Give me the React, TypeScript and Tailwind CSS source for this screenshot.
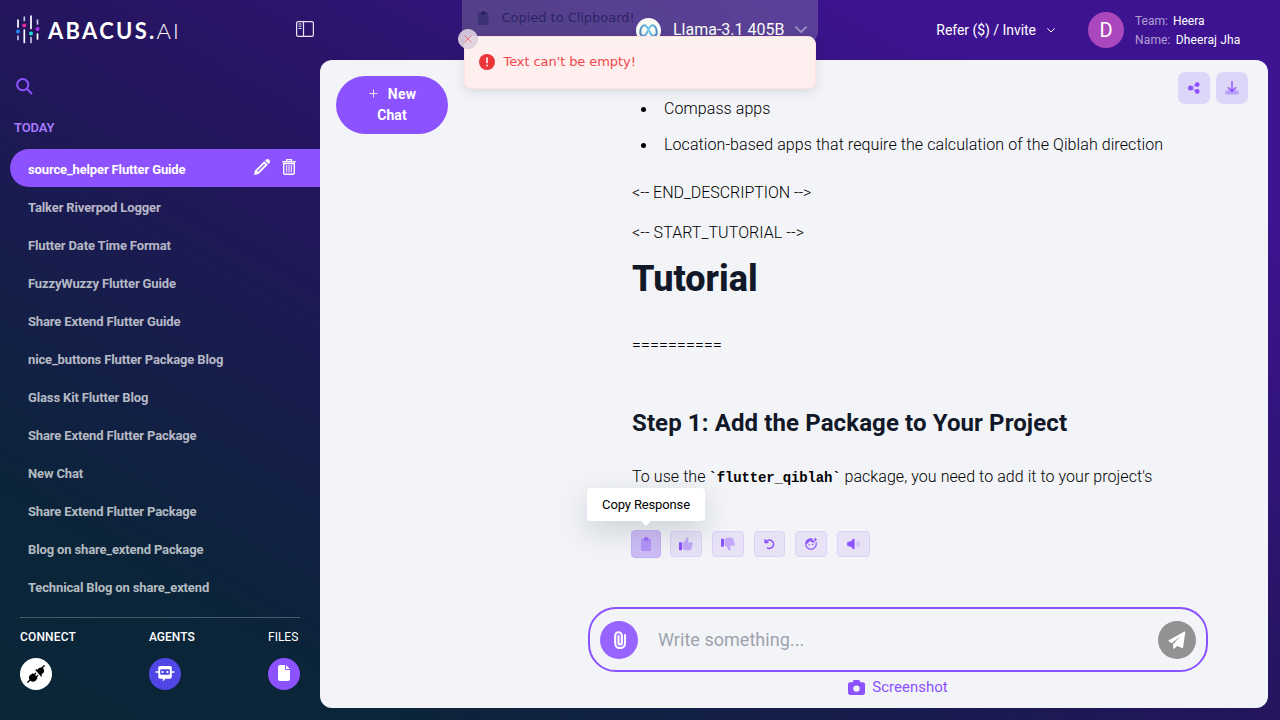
import type { ReactNode } from "react";
import { ImPencil } from "react-icons/im";
import { MdFaceRetouchingNatural } from "react-icons/md";
import { FaCamera, FaFile } from "react-icons/fa6";

const chats = [
  "source_helper Flutter Guide",
  "Talker Riverpod Logger",
  "Flutter Date Time Format",
  "FuzzyWuzzy Flutter Guide",
  "Share Extend Flutter Guide",
  "nice_buttons Flutter Package Blog",
  "Glass Kit Flutter Blog",
  "Share Extend Flutter Package",
  "New Chat",
  "Share Extend Flutter Package",
  "Blog on share_extend Package",
  "Technical Blog on share_extend",
];

function LogoMark() {
  return (
    <svg width="24" height="30" viewBox="0 0 24 30" fill="none" strokeLinecap="round" strokeWidth="1.7" className="shrink-0">
      <g stroke="#fff">
        <path d="M2 5v7M8.3 15v12.5M15 1v12.5M21.5 19v5" />
      </g>
      <g stroke="#b9c4e6">
        <path d="M2 21v3.5M8.3 2v3.5M15 22.5v5M21.5 5v4" />
      </g>
      <circle cx="2" cy="16.500" r="2" fill="#1e88f5" />
      <circle cx="8.3" cy="10.500" r="2" fill="#ec2ba0" />
      <circle cx="15" cy="18.500" r="2" fill="#1fe0d8" />
      <circle cx="21.5" cy="14" r="2" fill="#b030f5" />
    </svg>
  );
}

function SidebarIcon() {
  return (
    <svg width="18" height="16" viewBox="0 0 18 16" fill="none" stroke="#e9e4f5">
      <rect x=".6" y=".6" width="16.8" height="14.8" rx="1.6" strokeWidth="1.2" />
      <path d="M7.5.6v14.8" strokeWidth="1.2" />
      <path d="M2.5 3h3M2.5 5.2h3M2.5 7.5h3" strokeWidth="1" />
    </svg>
  );
}

function TrashIcon() {
  return (
    <svg width="14" height="16" viewBox="0 0 14 16" fill="none" stroke="#fff">
      <path d="M.3 2.700h13.400" strokeWidth="1.500" />
      <path d="M4.600 2.300V.700h4.800v1.600" strokeWidth="1.200" />
      <path d="M1.700 4.500V14a1.300 1.300 0 0 0 1.300 1.300h8a1.300 1.300 0 0 0 1.300-1.300V4.500z" strokeWidth="1.400" />
      <path d="M4.700 6v7.500M7 6v7.500M9.300 6v7.500" strokeWidth="1" />
    </svg>
  );
}

function PaperclipIcon() {
  return (
    <svg width="14" height="18" viewBox="0 0 14 18" fill="none" stroke="#fff" strokeWidth="2.100" strokeLinecap="round" className="ml-px">
      <path d="M12 4v8.200a4.900 4.900 0 0 1-9.800 0V4.500a3.300 3.300 0 0 1 6.600 0v7.400a1.650 1.650 0 0 1-3.300 0V5" />
    </svg>
  );
}

function SendIcon() {
  return (
    <svg width="18" height="18" viewBox="0 0 18 18" fill="#fff" className="-mt-px">
      <path d="M16.400.5c.5-.3 1 0 .9.600l-2.200 15.300c-.1.500-.6.800-1 .6l-5-2.100-2.700 2.600c-.6.500-1.300.2-1.300-.5v-3.700l7.600-8.300-9 7.200L.9 10.600c-.6-.3-.6-1 0-1.300z" />
    </svg>
  );
}

function PlugIcon() {
  return (
    <svg width="18" height="18" viewBox="0 0 18 18" fill="#000" stroke="#000">
      <path d="M.8 17.2l3-3M17.2.8l-3 3" strokeWidth="1.3" strokeLinecap="round" />
      <path d="M2.8 10.2l3-2 1.2.8 1.5-1.6.9 1-1.4 1.5 1.2 1.2 1.4-1.4.9.9-1.5 1.5.6 1-2 2.6a4 4 0 0 1-4.8.4 4 4 0 0 1-1-5.900z" stroke="none" />
      <path d="M8.3 4.900l1-.9 1 .9 1.600-2a4 4 0 0 1 4.200.4 4 4 0 0 1 .2 4.800l-2 1.700.8 1-.9.9z" stroke="none" />
    </svg>
  );
}

function BotIcon() {
  return (
    <svg width="20" height="16" viewBox="0 0 20 16" fill="none">
      <path d="M.5 6h3M16.500 6h3" stroke="#fff" strokeWidth="1.300" />
      <path d="M5 0h10a1.800 1.800 0 0 1 1.800 2v8.700a2 2 0 0 1-1.800 2h-4.500L7.800 15.500v-2.800H5a2 2 0 0 1-1.800-2V2A1.800 1.800 0 0 1 5 0z" fill="#fff" />
      <rect x="5.200" y="3.300" width="9.600" height="5.400" rx="1" fill="#4f46e5" />
      <rect x="6.700" y="5" width="1.800" height="2" fill="#fff" />
      <rect x="11.500" y="5" width="1.800" height="2" fill="#fff" />
    </svg>
  );
}

function ClipIcon({ size = 14, className = "" }: { size?: number; className?: string }) {
  return (
    <svg width={size * 0.75} height={size} viewBox="0 0 384 512" fill="currentColor" className={className}>
      <path opacity=".4" d="M336 64h-56v48c0 9-7 16-16 16H120c-9 0-16-7-16-16V64H48C21 64 0 85 0 112v352c0 26 21 48 48 48h288c27 0 48-22 48-48V112c0-27-21-48-48-48z" />
      <path d="M264 48h-17a56 56 0 0 0-110 0h-17c-9 0-16 7-16 16v48c0 9 7 16 16 16h144c9 0 16-7 16-16V64c0-9-7-16-16-16zM192 82a22 22 0 1 1 0-44 22 22 0 0 1 0 44z" />
    </svg>
  );
}

const thumbHand =
  "M104 224c0-20 10-30 22-43 40-42 76-76 92-110C234 40 226 0 260 0c38 0 56 28 56 80 0 40-18 66-28 96h130c34 0 56 24 56 52 0 20-10 36-20 44 8 20 4 44-14 58 8 22 0 46-18 58 6 40-12 92-96 92h-50c-80 0-110-34-152-44-12-2-22-12-22-24z";

function ThumbIcon({ down = false }: { down?: boolean }) {
  return (
    <svg width="14" height="14" viewBox="-32 -16 512 512" fill="currentColor">
      <rect x="-32" y="176" width="112" height="290" rx="24" transform={down ? "translate(0 -130)" : undefined} />
      <path opacity=".4" d={thumbHand} transform={down ? "matrix(1 0 0 -1 0 480)" : undefined} />
    </svg>
  );
}

function UndoIcon() {
  return (
    <svg width="12" height="12" viewBox="0 0 12 12" fill="none" stroke="currentColor" strokeWidth="1.500">
      <path d="M1.200 1.200v3.300h3.300" />
      <path d="M1.600 4.300A4.200 4.200 0 1 1 3 9.700" />
    </svg>
  );
}

function SpeakerIcon() {
  return (
    <svg width="14" height="12" viewBox="0 0 14 12" fill="none">
      <path d="M1 3.800h2L6.600.800c.5-.4 1-.1 1 .5v9.400c0 .6-.5.900-1 .5L3 8.200H1a.8.8 0 0 1-.8-.8V4.600c0-.4.4-.8.8-.8z" fill="currentColor" />
      <path d="M9.300 4.300q1.400 1.700 0 3.400M11.200 2.800q2.400 3.200 0 6.400" stroke="currentColor" strokeWidth="1" opacity=".4" />
    </svg>
  );
}

function ShareIcon() {
  return (
    <svg width="12" height="12" viewBox="0 0 12 12" className="-mt-px">
      <path d="M9 2.500L3 6l6 3.500" stroke="#8c52ff" strokeWidth="1.500" fill="none" opacity=".4" />
      <g fill="#8c52ff">
        <circle cx="2.500" cy="6" r="2.500" />
        <circle cx="9.200" cy="2.600" r="2.400" />
        <circle cx="9.200" cy="9.400" r="2.400" />
      </g>
    </svg>
  );
}

function DownloadIcon() {
  return (
    <svg width="14" height="14" viewBox="0 0 14 14" fill="none" className="-mt-px">
      <rect x=".3" y="9.500" width="13.400" height="4" rx="1" fill="#8c52ff" opacity=".4" />
      <path d="M7 .8v9M3.300 6.800L7 10.500l3.700-3.700" stroke="#8c52ff" strokeWidth="1.500" strokeLinecap="round" strokeLinejoin="round" />
    </svg>
  );
}

function MetaIcon() {
  return (
    <svg width="19" height="13" viewBox="0 0 19 13" fill="none">
      <defs>
        <linearGradient id="meta" x1="0" x2="1">
          <stop offset="0" stopColor="#2f6fb5" />
          <stop offset=".5" stopColor="#5bc0f5" />
          <stop offset="1" stopColor="#2f72bd" />
        </linearGradient>
      </defs>
      <path
        d="M1.300 9C1.300 4.500 3 1.200 5.600 1.200c3.700 0 5 10.600 8.700 10.600 2 0 3.400-1 3.400-2.800 0-4.500-1.700-7.800-4.300-7.800-3.700 0-5 10.600-8.700 10.600-2 0-3.400-1-3.400-2.800z"
        stroke="url(#meta)"
        strokeWidth="2"
      />
    </svg>
  );
}

function Tool({ children, wide = "w-[32px]" }: { children: ReactNode; wide?: string }) {
  return (
    <button className={`flex h-[26px] items-center justify-center rounded-[4px] border border-[#dcd2f8] bg-[#e7e2f6] text-[#8c52ff] ${wide}`}>
      {children}
    </button>
  );
}

function Bullet({ children }: { children: ReactNode }) {
  return (
    <li className="flex items-center gap-[18px] pl-[9px]">
      <span className="size-[5px] rounded-full bg-black" />
      <span>{children}</span>
    </li>
  );
}

function Sidebar() {
  return (
    <aside className="flex w-[320px] shrink-0 flex-col">
      <div className="flex h-[60px] items-center pl-[16px] pr-[6px]">
        <LogoMark />
        <div className="ml-[8px] mt-px flex w-[131px] items-baseline whitespace-nowrap font-['Lato'] text-[22px] leading-[24px] text-white">
          <span className="font-bold tracking-[2.300px]">ABACUS.</span>
          <span className="font-light tracking-[2px]">AI</span>
        </div>
        <div className="mb-[2px] ml-auto">
          <SidebarIcon />
        </div>
      </div>
      <div className="flex h-[52px] items-center pl-[16px]">
        <svg width="17" height="17" viewBox="0 0 17 17" fill="none" stroke="#8c52ff" strokeWidth="2">
          <circle cx="6.700" cy="6.700" r="5.600" />
          <path d="M10.800 10.800l5.200 5.200" />
        </svg>
      </div>
      <div className="flex h-[37px] items-start pl-[14px] pt-[7px] text-[13px] font-semibold leading-[18px] tracking-[-0.1px] text-[#a87bff]">TODAY</div>
      <nav className="flex flex-col tracking-[-0.14px]">
        {chats.map((name, i) => (
          <div
            key={i}
            className={
              i === 0
                ? "ml-[10px] flex h-[38px] items-center rounded-l-full bg-[#8c52ff] pl-[18px] pr-[24px] pt-[3px] text-[13px] font-bold text-white"
                : "ml-[10px] flex h-[38px] items-center pl-[18px] pt-[3px] text-[13px] font-bold text-white/70"
            }
          >
            <span>{name}</span>
            {i === 0 && (
              <span className="-mt-[6px] ml-auto flex gap-[12px]">
                <ImPencil size={16} />
                <TrashIcon />
              </span>
            )}
          </div>
        ))}
      </nav>
      <div className="mx-[20px] mt-[12px] flex border-t border-white/25 pt-[11px] text-[12px] leading-[16px] text-white">
        <div className="flex w-[129px] flex-col gap-[13px] font-medium tracking-[0.15px]">
          CONNECT
          <span className="flex size-[32px] items-center justify-center rounded-full bg-white">
            <PlugIcon />
          </span>
        </div>
        <div className="flex flex-col gap-[13px] font-medium">
          AGENTS
          <span className="flex size-[32px] items-center justify-center rounded-full bg-[#4f46e5]">
            <BotIcon />
          </span>
        </div>
        <div className="ml-auto flex w-[32px] flex-col gap-[13px]">
          FILES
          <span className="flex size-[32px] items-center justify-center rounded-full bg-[#8c52ff] pb-[2px]">
            <FaFile size={16} />
          </span>
        </div>
      </div>
    </aside>
  );
}

function Header() {
  return (
    <header className="flex h-[60px] shrink-0 items-center pl-[316px] pr-[39px] text-white">
      <span className="flex size-[25px] items-center justify-center rounded-full bg-white">
        <MetaIcon />
      </span>
      <span className="ml-[12px] w-[112px] whitespace-nowrap text-[16px]">Llama-3.1 405B</span>
      <svg width="12" height="8" viewBox="0 0 12 8" fill="none" className="ml-[10px]">
        <path d="M1 1.200l5 5 5-5" stroke="#8f7dc4" strokeWidth="1.800" strokeLinecap="round" strokeLinejoin="round" />
      </svg>
      <span className="ml-auto whitespace-nowrap text-[14px] tracking-[-0.04px]">Refer ($) / Invite</span>
      <svg width="8" height="5" viewBox="0 0 8 5" fill="none" className="ml-[11px]">
        <path d="M.600.600L4 4 7.400.600" stroke="#fff" strokeWidth="1" strokeLinecap="round" />
      </svg>
      <span className="ml-[33px] flex size-[36px] items-center justify-center rounded-full bg-[#ab47bc] text-[20px]">D</span>
      <div className="ml-[11px] flex w-[106px] flex-col gap-[3px] whitespace-nowrap pt-px text-[12px] leading-[16px]">
        <div><span className="mr-[5px] text-white/60">Team:</span>Heera</div>
        <div><span className="mr-[5px] tracking-[0.15px] text-white/60">Name:</span><span className="tracking-[0.15px]">Dheeraj Jha</span></div>
      </div>
    </header>
  );
}

function Toasts() {
  return (
    <>
      <div className="absolute left-[462px] top-[-12px] flex h-[53px] w-[356px] items-center rounded-[8px] bg-[#e0f0d0]/20 pl-[16px] pt-[7px] font-['DejaVu_Sans'] text-[13px] tracking-[-0.03px] text-[#1c1c58]/80">
        <ClipIcon size={14} className="text-[#1c1c58]" />
        <span className="ml-[13px]">Copied to Clipboard!</span>
      </div>
      <div className="absolute left-[464px] top-[36px] flex h-[53px] w-[352px] items-center rounded-[8px] border border-[#ffe0e1] bg-[linear-gradient(#fbf2ef,#fbf0ee_12%,#ffefee_20%,#ffefee)] pb-px pl-[14px] font-['DejaVu_Sans'] text-[13px] tracking-[-0.08px] text-[#f0484a] shadow-[0_4px_12px_rgba(0,0,0,0.1)]">
        <svg width="16" height="16" viewBox="0 0 16 16">
          <circle cx="8" cy="8" r="8" fill="#ec3539" />
          <path d="M8 4v4.500M8 11.300v.4" stroke="#fff0f0" strokeWidth="1.700" strokeLinecap="round" />
        </svg>
        <span className="ml-[8.5px]">Text can't be empty!</span>
      </div>
      <div className="absolute left-[458px] top-[29px] flex size-[20px] items-center justify-center rounded-full border border-[#dccadb] bg-[#e0d0e0]/90">
        <svg width="8" height="8" viewBox="0 0 8 8" stroke="#ee5a5c" strokeWidth=".8">
          <path d="M.5.500l7 7M7.500.500l-7 7" />
        </svg>
      </div>
    </>
  );
}

export default function App() {
  return (
    <div className="relative flex h-[720px] w-[1280px] overflow-hidden bg-[linear-gradient(to_top_right,#0a2737_0%,#0b2439_16%,#181c4e_36%,#24155d_50%,#3d1392_85%,#3d1392_100%)] font-['Roboto',sans-serif]">
      <Sidebar />
      <div className="flex min-w-0 flex-1 flex-col">
        <Header />
        <main className="mb-[12px] mr-[12px] flex h-[648px] rounded-[12px] bg-[#f3f4f8]">
          <button className="ml-[16px] mt-[16px] h-[58px] w-[112px] shrink-0 rounded-[29px] bg-[#8c52ff] text-center text-[14px] font-bold leading-[21px] text-white">
            <svg width="9" height="9" viewBox="0 0 9 9" className="ml-px mr-[10px] inline align-[1px]" stroke="#fff" strokeOpacity=".85">
              <path d="M4.500.500v8M.500 4.500h8" />
            </svg>
            <span className="tracking-[0.2px]">New</span>
            <br />
            <span className="tracking-[0.1px]">Chat</span>
          </button>
          <div className="ml-[140px] flex w-[620px] flex-col">
            <div className="h-[428px] overflow-hidden pl-[44px] pt-[37px] text-[16px] font-light leading-[24px] text-black">
              <ul className="flex flex-col gap-[12px] whitespace-nowrap tracking-[0.08px]">
                <Bullet>Compass apps</Bullet>
                <Bullet>Location-based apps that require the calculation of the Qiblah direction</Bullet>
              </ul>
              <p className="mt-[24px] tracking-[-0.04px]">&lt;-- END_DESCRIPTION --&gt;</p>
              <p className="mt-[16px] tracking-[0.08px]">&lt;-- START_TUTORIAL --&gt;</p>
              <h1 className="mt-[14px] text-[36px] font-extrabold leading-[40px] text-[#111827]">Tutorial</h1>
              <p className="mt-[34px] tracking-[0.15px]">==========</p>
              <h2 className="mt-[50px] text-[24px] font-bold leading-[32px] tracking-[0.11px] text-[#111827]">Step 1: Add the Package to Your Project</h2>
              <p className="mt-[26px] whitespace-nowrap tracking-[0.06px]">
                To use the <code className="-ml-px font-['Liberation_Mono'] text-[14px] font-bold tracking-[-0.15px]">`flutter_qiblah`</code> package, you need to add it to your project's
              </p>
            </div>
            <div className="relative mt-[42px] flex items-center gap-[10px] pl-[43px]">
              <button className="-mr-px flex h-[28px] w-[30px] items-center justify-center rounded-[4px] border border-[#c7b1f5] bg-[#cdbcf5] text-[#8c52ff]">
                <ClipIcon size={14} />
              </button>
              <div className="absolute left-[-1px] top-[-42px] flex h-[33px] w-[118px] items-center justify-center rounded-[4px] bg-white text-[13px] tracking-[-0.14px] text-black shadow-[0_10px_30px_rgba(60,80,90,0.22)]">
                Copy Response
                <svg width="10" height="5" viewBox="0 0 10 5" fill="#fff" className="absolute left-[54px] top-[33px]">
                  <path d="M0 0h10L5 5z" />
                </svg>
              </div>
              <Tool><ThumbIcon /></Tool>
              <Tool><ThumbIcon down /></Tool>
              <Tool wide="w-[31px]"><UndoIcon /></Tool>
              <Tool><MdFaceRetouchingNatural size={14} /></Tool>
              <Tool wide="w-[33px]"><SpeakerIcon /></Tool>
            </div>
            <div className="mt-[49px] flex h-[65px] items-center rounded-[28px] border-2 border-[#8c52ff] px-[10px] pt-px">
              <span className="flex size-[38px] items-center justify-center rounded-full bg-[#9764ff]">
                <PaperclipIcon />
              </span>
              <span className="-mt-[2px] ml-[20px] text-[18px] tracking-[0.04px] text-[#9ca3af]">Write something...</span>
              <span className="ml-auto flex size-[38px] items-center justify-center rounded-full bg-[#929293]">
                <SendIcon />
              </span>
            </div>
            <div className="mt-[4px] flex items-center justify-center gap-[7px] text-[15px] leading-[22px] text-[#8c52ff]">
              <FaCamera size={17} />
              Screenshot
            </div>
          </div>
          <div className="-mr-[40px] ml-[-30px] flex gap-[6px] pt-[12px]">
            <button className="flex size-[32px] items-center justify-center rounded-[7px] bg-[#ded6f8]"><ShareIcon /></button>
            <button className="flex size-[32px] items-center justify-center rounded-[7px] bg-[#ded6f8]"><DownloadIcon /></button>
          </div>
        </main>
      </div>
      <Toasts />
    </div>
  );
}
